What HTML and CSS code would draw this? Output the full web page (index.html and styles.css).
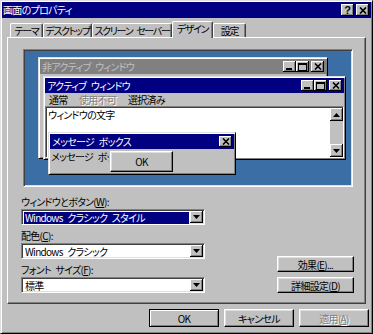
FILE: index.html
```html
<!DOCTYPE html>
<html lang="ja">
<head>
    <meta charset="UTF-8">
    <title>画面のプロパティ</title>
    <link rel="stylesheet" href="styles.css">
</head>
<body>
<div class="dialog">
    <!-- Title bar -->
    <div class="titlebar">
        <span class="title">画面のプロパティ</span>
        <div class="caption-btns">
            <div class="cap-btn help">?</div>
            <div class="cap-btn">
                <svg width="8" height="7"><path d="M1 0.5l6 6M7 0.5l-6 6" stroke="#000" stroke-width="1.7"/></svg>
            </div>
        </div>
    </div>

    <!-- Tabs -->
    <div class="tabs">
        <div class="tab" style="width:33px">テーマ</div>
        <div class="tab" style="width:49px">デスクトップ</div>
        <div class="tab" style="width:80px">スクリーン セーバー</div>
        <div class="tab selected" style="width:41px">デザイン</div>
        <div class="tab" style="width:33px">設定</div>
    </div>

    <div class="panel">
        <!-- Preview desktop -->
        <div class="preview">
            <div class="win win-inactive">
                <div class="win-title">
                    <span>非アクティブ ウィンドウ</span>
                    <div class="mini-btns">
                        <div class="mini-btn"><svg class="min-glyph" width="6" height="2"><rect width="6" height="2"/></svg></div>
                        <div class="mini-btn"><svg width="9" height="8"><rect x="0.5" y="0.5" width="8" height="7" fill="none" stroke="#000"/><rect x="0" y="1" width="9" height="1"/></svg></div>
                        <div class="mini-btn close"><svg width="8" height="7"><path d="M1 0.5l6 6M7 0.5l-6 6" stroke="#000" stroke-width="1.6"/></svg></div>
                    </div>
                </div>
            </div>

            <div class="win win-active">
                <div class="win-title">
                    <span>アクティブ ウィンドウ</span>
                    <div class="mini-btns">
                        <div class="mini-btn"><svg class="min-glyph" width="6" height="2"><rect width="6" height="2"/></svg></div>
                        <div class="mini-btn"><svg width="9" height="8"><rect x="0.5" y="0.5" width="8" height="7" fill="none" stroke="#000"/><rect x="0" y="1" width="9" height="1"/></svg></div>
                        <div class="mini-btn close"><svg width="8" height="7"><path d="M1 0.5l6 6M7 0.5l-6 6" stroke="#000" stroke-width="1.6"/></svg></div>
                    </div>
                </div>
                <div class="menu">
                    <span class="menu-item">通常</span>
                    <span class="menu-item disabled">使用不可</span>
                    <span class="menu-item">選択済み</span>
                </div>
                <div class="textbox">
                    <span class="textbox-text">ウィンドウの文字</span>
                    <div class="scrollbar">
                        <div class="scroll-btn"><svg width="7" height="4"><path d="M3.5 0L7 4H0z"/></svg></div>
                        <div class="scroll-btn"><svg width="7" height="4"><path d="M0 0h7L3.5 4z"/></svg></div>
                    </div>
                </div>
            </div>

            <div class="win msgbox">
                <div class="win-title">
                    <span>メッセージ ボックス</span>
                    <div class="mini-btns">
                        <div class="mini-btn close"><svg width="8" height="7"><path d="M1 0.5l6 6M7 0.5l-6 6" stroke="#000" stroke-width="1.6"/></svg></div>
                    </div>
                </div>
                <div class="msg-body">
                    <span class="msg-text">メッセージ ボックス</span>
                    <div class="btn msg-ok">OK</div>
                </div>
            </div>
        </div>

        <!-- Options -->
        <div class="options">
            <div class="fields">
                <div class="field-label">ウィンドウとボタン(<u>W</u>):</div>
                <div class="combo">
                    <div class="combo-text focused"><span>Windows クラシック スタイル</span></div>
                    <div class="combo-btn"><svg width="7" height="4"><path d="M0 0h7L3.5 4z"/></svg></div>
                </div>

                <div class="field-label">配色(<u>C</u>):</div>
                <div class="combo">
                    <div class="combo-text"><span>Windows クラシック</span></div>
                    <div class="combo-btn"><svg width="7" height="4"><path d="M0 0h7L3.5 4z"/></svg></div>
                </div>

                <div class="field-label">フォント サイズ(<u>F</u>):</div>
                <div class="combo">
                    <div class="combo-text"><span>標準</span></div>
                    <div class="combo-btn"><svg width="7" height="4"><path d="M0 0h7L3.5 4z"/></svg></div>
                </div>
            </div>

            <div class="side-btns">
                <div class="btn">効果(<u>E</u>)...</div>
                <div class="btn">詳細設定(<u>D</u>)</div>
            </div>
        </div>
    </div>

    <!-- Footer buttons -->
    <div class="footer">
        <div class="btn default">OK</div>
        <div class="btn">キャンセル</div>
        <div class="btn disabled">適用(<u>A</u>)</div>
    </div>
</div>
</body>
</html>
```

FILE: styles.css
```css
* {
    margin: 0;
    padding: 0;
    box-sizing: border-box;
}

body {
    background: #c0c0c0;
    font-family: "Noto Sans CJK JP", "Liberation Sans", sans-serif;
    font-size: 10px;
    letter-spacing: -0.7px;
    word-spacing: 3px;
    font-feature-settings: "palt";
    color: #000;
}

.dialog {
    width: 373px;
    height: 334px;
    border: 1px solid;
    border-color: #dfdfdf #000 #000 #dfdfdf;
    box-shadow: inset 1px 1px #fff, inset -1px -1px #808080;
    padding: 1px;
    display: flex;
    flex-direction: column;
}

/* title bar */
.titlebar {
    height: 16px;
    background: #000080;
    color: #fff;
    display: flex;
    align-items: center;
    justify-content: space-between;
    padding: 0 2px 0 1px;
}

.title { line-height: 14px; }

.caption-btns {
    display: flex;
    gap: 2px;
}

.cap-btn {
    width: 13px;
    height: 12px;
    background: #c0c0c0;
    color: #000;
    display: flex;
    align-items: center;
    justify-content: center;
    box-shadow: inset -1px -1px #000, inset 1px 1px #fff, inset -2px -2px #808080;
}

.cap-btn.help {
    font-family: "Liberation Sans", sans-serif;
    font-weight: bold;
    font-size: 11px;
    letter-spacing: 0;
    line-height: 12px;
}

/* tabs */
.tabs {
    display: flex;
    align-items: flex-end;
    height: 19px;
    padding-left: 8px;
    position: relative;
    z-index: 1;
}

.tab {
    height: 14px;
    line-height: 13px;
    text-align: center;
    white-space: nowrap;
    letter-spacing: -1.3px;
    border-top: 1px solid #fff;
    border-left: 1px solid #fff;
    border-right: 1px solid #404040;
    box-shadow: inset -1px 0 #808080;
    border-radius: 2px 2px 0 0;
    background: #c0c0c0;
}

.tab.selected {
    height: 17px;
    margin-bottom: -1px;
    line-height: 14px;
}

/* panel */
.panel {
    margin-left: 5px;
    width: 359px;
    height: 267px;
    border: 1px solid;
    border-color: #fff #404040 #404040 #fff;
    box-shadow: inset -1px -1px #808080;
    padding: 11px 0 0 15px;
}

.preview {
    position: relative;
    width: 330px;
    height: 138px;
    background: #3a6ea5;
    border: 1px solid;
    border-color: #808080 #fff #fff #808080;
    box-shadow: inset 1px 1px #404040, inset -1px -1px #dfdfdf;
}

/* preview windows */
.win {
    position: absolute;
    background: #c0c0c0;
    border: 1px solid;
    border-color: #dfdfdf #000 #000 #dfdfdf;
    box-shadow: inset 1px 1px #fff, inset -1px -1px #808080;
    padding: 1px;
    display: flex;
    flex-direction: column;
}

.win-inactive { left: 14px; top: 7px; width: 290px; height: 102px; }
.win-active { left: 19px; top: 26px; width: 303px; height: 84px; }
.msgbox { left: 24px; top: 82px; width: 188px; height: 43px; }

.win-title {
    height: 15px;
    flex-shrink: 0;
    background: #000080;
    color: #fff;
    display: flex;
    align-items: center;
    justify-content: space-between;
    padding: 0 2px 0 2px;
    line-height: 13px;
}

.win-inactive .win-title {
    background: #808080;
    color: #c0c0c0;
}

.mini-btns {
    display: flex;
}

.mini-btn {
    width: 13px;
    height: 11px;
    background: #c0c0c0;
    display: flex;
    align-items: center;
    justify-content: center;
    box-shadow: inset -1px -1px #000, inset 1px 1px #fff, inset -2px -2px #808080;
}

.min-glyph { margin-top: 5px; margin-right: 2px; }
.mini-btn.close { margin-left: 2px; }
.msgbox .mini-btn.close { margin-left: 0; }

.menu {
    height: 13px;
    display: flex;
    align-items: center;
    padding-left: 4px;
    line-height: 13px;
}

.menu-item:nth-child(1) { width: 30px; }
.menu-item:nth-child(2) { width: 49px; }

.disabled {
    color: #808080;
    text-shadow: 1px 1px #fff;
}

.textbox {
    flex: 1;
    background: #fff;
    border: 1px solid;
    border-color: #808080 #fff #fff #808080;
    box-shadow: inset 1px 1px #404040;
    display: flex;
    padding: 1px 0 0 1px;
}

.textbox-text {
    padding: 1px 1px;
    line-height: 12px;
}

.scrollbar {
    margin-left: auto;
    width: 13px;
    background: #c0c0c0;
    display: flex;
    flex-direction: column;
    justify-content: space-between;
}

.scroll-btn {
    width: 13px;
    height: 13px;
    display: flex;
    align-items: center;
    justify-content: center;
    box-shadow: inset -1px -1px #000, inset 1px 1px #fff, inset -2px -2px #808080;
}

.msg-body {
    position: relative;
    flex: 1;
    padding: 1px 1px;
    line-height: 13px;
}

.msg-text {
    display: block;
    width: 58px;
    overflow: hidden;
    white-space: nowrap;
}

.msg-ok {
    position: absolute;
    left: 60px;
    top: 2px;
    width: 63px;
    height: 21px;
}

/* options */
.options {
    display: flex;
    margin: 8px 0 0 -2px;
}

.fields { width: 184px; }

.field-label {
    height: 14px;
    line-height: 14px;
    margin-top: 4px;
}

.field-label:first-child { margin-top: 0; }

.combo {
    height: 16px;
    background: #fff;
    border: 1px solid;
    border-color: #808080 #fff #fff #808080;
    box-shadow: inset 1px 1px #404040, inset -1px -1px #dfdfdf;
    display: flex;
    padding: 1px;
}

.combo-text {
    flex: 1;
    padding: 1px 1px;
    line-height: 12px;
    white-space: nowrap;
}

.combo-text span { display: block; padding: 0 1px; }

.combo-text.focused span {
    background: #000080;
    color: #fff;
}

.combo-btn {
    width: 13px;
    background: #c0c0c0;
    display: flex;
    align-items: center;
    justify-content: center;
    box-shadow: inset -1px -1px #000, inset 1px 1px #fff, inset -2px -2px #808080;
}

.side-btns {
    margin-left: 72px;
    width: 77px;
    display: flex;
    flex-direction: column;
    justify-content: flex-end;
    gap: 5px;
}

/* buttons */
.btn {
    background: #c0c0c0;
    border: 1px solid;
    border-color: #fff #000 #000 #fff;
    box-shadow: inset -1px -1px #808080, inset 1px 1px #dfdfdf;
    display: flex;
    align-items: center;
    justify-content: center;
    line-height: 13px;
    white-space: nowrap;
}

.side-btns .btn { height: 16px; }

.footer {
    display: flex;
    justify-content: flex-end;
    gap: 5px;
    margin-top: 5px;
    padding-right: 2px;
}

.footer .btn {
    width: 70px;
    height: 18px;
}

.btn.default {
    border-color: #000;
    box-shadow: inset 1px 1px #fff, inset -1px -1px #808080;
}
```
